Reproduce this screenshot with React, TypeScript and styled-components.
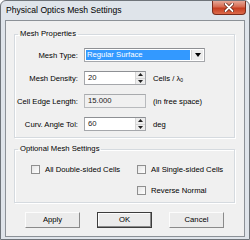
import styled, { createGlobalStyle } from "styled-components";

const GlobalStyle = createGlobalStyle`
  html, body {
    margin: 0;
    padding: 0;
    background: #ffffff;
  }
  body {
    font-family: "Liberation Sans", Arial, sans-serif;
    color: #000;
  }
`;

const Window = styled.div`
  width: 250px;
  height: 240px;
  box-sizing: border-box;
  background: #dfe4ea;
  border: 1px solid #6f747a;
  border-radius: 6px 6px 0 0;
  display: flex;
  flex-direction: column;
`;

const TitleBar = styled.div`
  height: 19px;
  display: flex;
  align-items: flex-start;
  padding-left: 5px;
`;

const Title = styled.div`
  font-size: 8.6px;
  line-height: 19px;
  color: #000;
`;

const CloseButton = styled.div`
  margin-left: auto;
  margin-right: 3px;
  width: 34px;
  height: 14px;
  box-sizing: border-box;
  border: 1px solid #7a2c1c;
  border-top: none;
  border-radius: 0 0 4px 4px;
  background: linear-gradient(#e6a898 0%, #d66a50 45%, #c53d20 55%, #dc6b4c 100%);
  display: flex;
  align-items: center;
  justify-content: center;
`;

const Client = styled.div`
  flex: 1;
  margin: 0 4px 2px 4px;
  border: 1px solid #8c9197;
  background: #f0f0f0;
  padding: 8px 9px 0 8px;
  display: flex;
  flex-direction: column;
`;

const Group = styled.fieldset<{ $gapTop?: number; $padTop: number; $padBottom: number }>`
  margin: ${(p) => p.$gapTop ?? 0}px 0 0 0;
  padding: ${(p) => p.$padTop}px 0 ${(p) => p.$padBottom}px 0;
  border: 1px solid #d5dadf;
  box-shadow: inset 1px 1px 0 #ffffff, 1px 1px 0 #ffffff;
  min-width: 0;
`;

const Legend = styled.legend`
  font-size: 7.7px;
  line-height: 10px;
  padding: 0 2px;
  margin-left: 3px;
`;

const Rows = styled.div`
  display: flex;
  flex-direction: column;
  gap: 9px;
`;

const Row = styled.div`
  display: flex;
  align-items: center;
  height: 14px;
`;

const Label = styled.div`
  width: 63px;
  margin-right: 6px;
  text-align: right;
  font-size: 7.7px;
  white-space: nowrap;
`;

const Suffix = styled.div`
  margin-left: 7px;
  font-size: 7.7px;
  white-space: nowrap;

  sub {
    font-size: 5px;
    vertical-align: -1px;
  }
`;

const Combo = styled.div`
  width: 121px;
  height: 14px;
  box-sizing: border-box;
  border: 1px solid #a5a7ab;
  border-top-color: #8e9094;
  background: #fff;
  display: flex;
  padding: 1px;
`;

const ComboValue = styled.div`
  flex: 1;
  background: #3399ff;
  color: #fff;
  font-size: 7.7px;
  line-height: 10px;
  padding-left: 1px;
`;

const ComboArrow = styled.div`
  width: 11px;
  margin-left: 1px;
  background: #ececec;
  border-left: 1px solid #d0d0d0;
  display: flex;
  align-items: center;
  justify-content: center;
`;

const Field = styled.div<{ $disabled?: boolean }>`
  width: 62px;
  height: 14px;
  box-sizing: border-box;
  border: 1px solid ${(p) => (p.$disabled ? "#b8babd" : "#a5a7ab")};
  border-top-color: ${(p) => (p.$disabled ? "#a8aaad" : "#8e9094")};
  background: ${(p) => (p.$disabled ? "#f0f0f0" : "#ffffff")};
  display: flex;
  align-items: stretch;
`;

const FieldText = styled.div`
  flex: 1;
  font-size: 7.7px;
  line-height: 12px;
  padding-left: 3px;
  color: #222;
`;

const Spinner = styled.div`
  width: 9px;
  display: flex;
  flex-direction: column;
  border-left: 1px solid #d6d6d6;
`;

const SpinHalf = styled.div`
  flex: 1;
  background: #ededed;
  border-bottom: 1px solid #d6d6d6;
  display: flex;
  align-items: center;
  justify-content: center;

  &:last-child {
    border-bottom: none;
  }
`;

const CheckGrid = styled.div`
  display: grid;
  grid-template-columns: 106px 1fr;
  row-gap: 9px;
  padding-left: 16px;
`;

const CheckItem = styled.div<{ $col?: number }>`
  grid-column: ${(p) => p.$col ?? "auto"};
  display: flex;
  align-items: center;
  height: 12px;
  font-size: 7.7px;
  white-space: nowrap;
`;

const Box = styled.span`
  width: 9px;
  height: 9px;
  box-sizing: border-box;
  border: 1px solid #8f8f8f;
  background: linear-gradient(135deg, #e4e4e4, #ffffff);
  margin-right: 5px;
  flex: none;
`;

const Buttons = styled.div`
  margin-top: 9px;
  display: flex;
  justify-content: center;
  gap: 17px;
`;

const Button = styled.div<{ $default?: boolean }>`
  width: 55px;
  height: 16px;
  box-sizing: border-box;
  background: #ebebeb;
  border: 1px solid ${(p) => (p.$default ? "#3c3c3c" : "#fcfcfc")};
  border-right-color: ${(p) => (p.$default ? "#3c3c3c" : "#8a8a8a")};
  border-bottom-color: ${(p) => (p.$default ? "#3c3c3c" : "#8a8a8a")};
  box-shadow: ${(p) => (p.$default ? "inset -1px -1px 0 #8a8a8a, inset 1px 1px 0 #fcfcfc" : "none")};
  font-size: 7.7px;
  line-height: 14px;
  text-align: center;
`;

const Tri = ({ up }: { up?: boolean }) => (
  <svg width="5" height="3" viewBox="0 0 5 3">
    <path d={up ? "M0 3 L2.5 0 L5 3 Z" : "M0 0 L5 0 L2.5 3 Z"} fill="#222" />
  </svg>
);

const SpinField = ({ value }: { value: string }) => (
  <Field>
    <FieldText>{value}</FieldText>
    <Spinner>
      <SpinHalf>
        <Tri up />
      </SpinHalf>
      <SpinHalf>
        <Tri />
      </SpinHalf>
    </Spinner>
  </Field>
);

export default function App() {
  return (
    <>
      <GlobalStyle />
      <Window>
        <TitleBar>
          <Title>Physical Optics Mesh Settings</Title>
          <CloseButton>
            <svg width="10" height="9" viewBox="0 0 10 9">
              <path
                d="M1.5 1 L8.5 8 M8.5 1 L1.5 8"
                stroke="#5a1a0c"
                strokeWidth="3.2"
                strokeLinecap="round"
              />
              <path
                d="M1.5 1 L8.5 8 M8.5 1 L1.5 8"
                stroke="#ffffff"
                strokeWidth="1.8"
                strokeLinecap="round"
              />
            </svg>
          </CloseButton>
        </TitleBar>

        <Client>
          <Group $padTop={9} $padBottom={6}>
            <Legend>Mesh Properties</Legend>
            <Rows>
              <Row>
                <Label>Mesh Type:</Label>
                <Combo>
                  <ComboValue>Regular Surface</ComboValue>
                  <ComboArrow>
                    <svg width="6" height="4" viewBox="0 0 6 4">
                      <path d="M0 0 L6 0 L3 4 Z" fill="#000" />
                    </svg>
                  </ComboArrow>
                </Combo>
              </Row>
              <Row>
                <Label>Mesh Density:</Label>
                <SpinField value="20" />
                <Suffix>
                  Cells / λ<sub>0</sub>
                </Suffix>
              </Row>
              <Row>
                <Label>Cell Edge Length:</Label>
                <Field $disabled>
                  <FieldText>15.000</FieldText>
                </Field>
                <Suffix>(in free space)</Suffix>
              </Row>
              <Row>
                <Label>Curv. Angle Tol:</Label>
                <SpinField value="60" />
                <Suffix>deg</Suffix>
              </Row>
            </Rows>
          </Group>

          <Group $gapTop={6} $padTop={9} $padBottom={6}>
            <Legend>Optional Mesh Settings</Legend>
            <CheckGrid>
              <CheckItem>
                <Box />
                All Double-sided Cells
              </CheckItem>
              <CheckItem>
                <Box />
                All Single-sided Cells
              </CheckItem>
              <CheckItem $col={2}>
                <Box />
                Reverse Normal
              </CheckItem>
            </CheckGrid>
          </Group>

          <Buttons>
            <Button>Apply</Button>
            <Button $default>OK</Button>
            <Button>Cancel</Button>
          </Buttons>
        </Client>
      </Window>
    </>
  );
}
